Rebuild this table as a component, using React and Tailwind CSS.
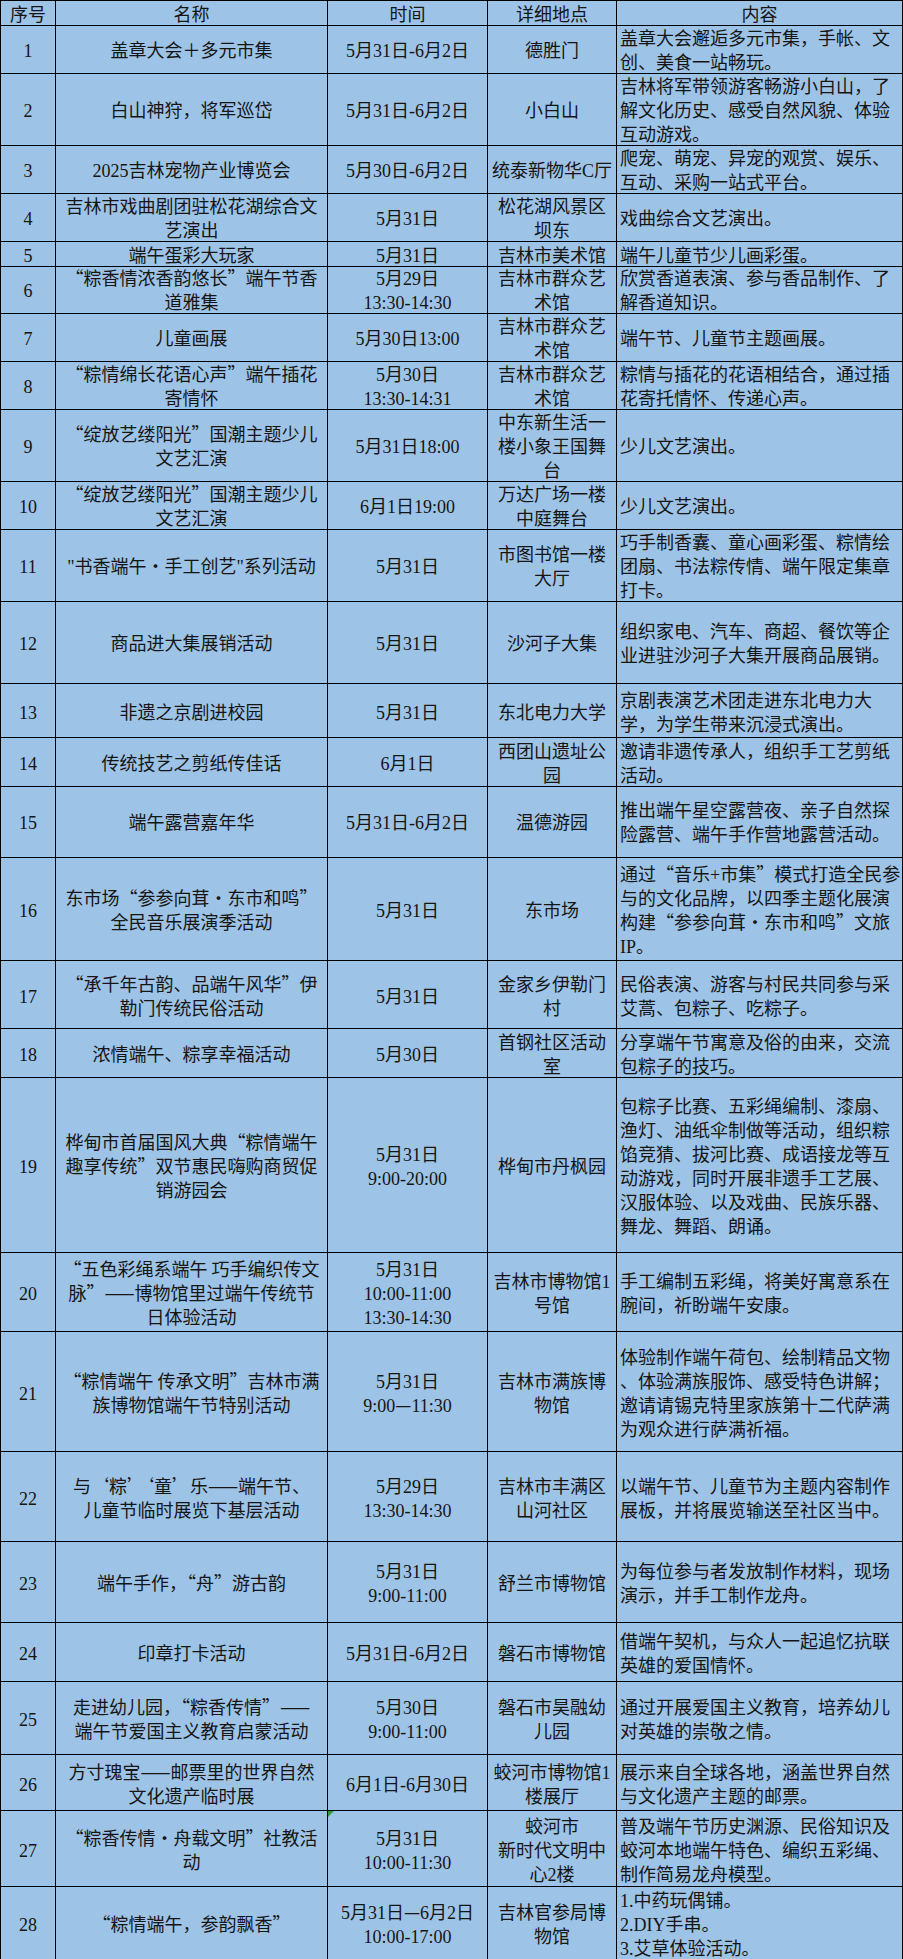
import React from 'react';

// 每行: 序号, 名称, 时间, 详细地点, 内容, 行高 ("|" 为换行)
const rows = [
  ['1', '盖章大会＋多元市集', '5月31日-6月2日', '德胜门', '盖章大会邂逅多元市集，手帐、文|创、美食一站畅玩。', 'h-[48px]'],
  ['2', '白山神狩，将军巡岱', '5月31日-6月2日', '小白山', '吉林将军带领游客畅游小白山，了|解文化历史、感受自然风貌、体验|互动游戏。', 'h-[72px]'],
  ['3', '2025吉林宠物产业博览会', '5月30日-6月2日', '统泰新物华C厅', '爬宠、萌宠、异宠的观赏、娱乐、|互动、采购一站式平台。', 'h-[48px]'],
  ['4', '吉林市戏曲剧团驻松花湖综合文|艺演出', '5月31日', '松花湖风景区|坝东', '戏曲综合文艺演出。', 'h-[49px]'],
  ['5', '端午蛋彩大玩家', '5月31日', '吉林市美术馆', '端午儿童节少儿画彩蛋。', 'h-[23px]'],
  ['6', '“粽香情浓香韵悠长”端午节香|道雅集', '5月29日|13:30-14:30', '吉林市群众艺|术馆', '欣赏香道表演、参与香品制作、了|解香道知识。', 'h-[48px]'],
  ['7', '儿童画展', '5月30日13:00', '吉林市群众艺|术馆', '端午节、儿童节主题画展。', 'h-[48px]'],
  ['8', '“粽情绵长花语心声”端午插花|寄情怀', '5月30日|13:30-14:31', '吉林市群众艺|术馆', '粽情与插花的花语相结合，通过插|花寄托情怀、传递心声。', 'h-[48px]'],
  ['9', '“绽放艺缕阳光”国潮主题少儿|文艺汇演', '5月31日18:00', '中东新生活一|楼小象王国舞|台', '少儿文艺演出。', 'h-[72px]'],
  ['10', '“绽放艺缕阳光”国潮主题少儿|文艺汇演', '6月1日19:00', '万达广场一楼|中庭舞台', '少儿文艺演出。', 'h-[48px]'],
  ['11', '"书香端午·手工创艺"系列活动', '5月31日', '市图书馆一楼|大厅', '巧手制香囊、童心画彩蛋、粽情绘|团扇、书法粽传情、端午限定集章|打卡。', 'h-[72px]'],
  ['12', '商品进大集展销活动', '5月31日', '沙河子大集', '组织家电、汽车、商超、餐饮等企|业进驻沙河子大集开展商品展销。', 'h-[83px]'],
  ['13', '非遗之京剧进校园', '5月31日', '东北电力大学', '京剧表演艺术团走进东北电力大|学，为学生带来沉浸式演出。', 'h-[54px]'],
  ['14', '传统技艺之剪纸传佳话', '6月1日', '西团山遗址公|园', '邀请非遗传承人，组织手工艺剪纸|活动。', 'h-[47px]'],
  ['15', '端午露营嘉年华', '5月31日-6月2日', '温德游园', '推出端午星空露营夜、亲子自然探|险露营、端午手作营地露营活动。', 'h-[73px]'],
  ['16', '东市场“参参向茸·东市和鸣”|全民音乐展演季活动', '5月31日', '东市场', '通过“音乐+市集”模式打造全民参|与的文化品牌，以四季主题化展演|构建“参参向茸·东市和鸣”文旅|IP。', 'h-[103px]'],
  ['17', '“承千年古韵、品端午风华”伊|勒门传统民俗活动', '5月31日', '金家乡伊勒门|村', '民俗表演、游客与村民共同参与采|艾蒿、包粽子、吃粽子。', 'h-[68px]'],
  ['18', '浓情端午、粽享幸福活动', '5月30日', '首钢社区活动|室', '分享端午节寓意及俗的由来，交流|包粽子的技巧。', 'h-[48px]'],
  ['19', '桦甸市首届国风大典“粽情端午|趣享传统”双节惠民嗨购商贸促|销游园会', '5月31日|9:00-20:00', '桦甸市丹枫园', '包粽子比赛、五彩绳编制、漆扇、|渔灯、油纸伞制做等活动，组织粽|馅竞猜、拔河比赛、成语接龙等互|动游戏，同时开展非遗手工艺展、|汉服体验、以及戏曲、民族乐器、|舞龙、舞蹈、朗诵。', 'h-[176px]'],
  ['20', '“五色彩绳系端午 巧手编织传文|脉”——博物馆里过端午传统节|日体验活动', '5月31日|10:00-11:00|13:30-14:30', '吉林市博物馆1|号馆', '手工编制五彩绳，将美好寓意系在|腕间，祈盼端午安康。', 'h-[79px]'],
  ['21', '“粽情端午 传承文明”吉林市满|族博物馆端午节特别活动', '5月31日|9:00—11:30', '吉林市满族博|物馆', '体验制作端午荷包、绘制精品文物|、体验满族服饰、感受特色讲解；|邀请请锡克特里家族第十二代萨满|为观众进行萨满祈福。', 'h-[120px]'],
  ['22', '与‘粽’‘童’乐——端午节、|儿童节临时展览下基层活动', '5月29日|13:30-14:30', '吉林市丰满区|山河社区', '以端午节、儿童节为主题内容制作|展板，并将展览输送至社区当中。', 'h-[90px]'],
  ['23', '端午手作，“舟”游古韵', '5月31日|9:00-11:00', '舒兰市博物馆', '为每位参与者发放制作材料，现场|演示，并手工制作龙舟。', 'h-[81px]'],
  ['24', '印章打卡活动', '5月31日-6月2日', '磐石市博物馆', '借端午契机，与众人一起追忆抗联|英雄的爱国情怀。', 'h-[59px]'],
  ['25', '走进幼儿园，“粽香传情”——|端午节爱国主义教育启蒙活动', '5月30日|9:00-11:00', '磐石市昊融幼|儿园', '通过开展爱国主义教育，培养幼儿|对英雄的崇敬之情。', 'h-[73px]'],
  ['26', '方寸瑰宝——邮票里的世界自然|文化遗产临时展', '6月1日-6月30日', '蛟河市博物馆1|楼展厅', '展示来自全球各地，涵盖世界自然|与文化遗产主题的邮票。', 'h-[56px]'],
  ['27', '“粽香传情·舟载文明”社教活|动', '5月31日|10:00-11:30', '蛟河市|新时代文明中|心2楼', '普及端午节历史渊源、民俗知识及|蛟河本地端午特色、编织五彩绳、|制作简易龙舟模型。', 'h-[76px]'],
  ['28', '“粽情端午，参韵飘香”', '5月31日—6月2日|10:00-17:00', '吉林官参局博|物馆', '1.中药玩偶铺。|2.DIY手串。|3.艾草体验活动。', 'h-[72px]'],
];

const cols = 'grid grid-cols-[55px_272px_160px_129px_286px]';

// 半角字母数字用衬线体, 其余用中文字体
const Mixed = ({ text }) =>
  text.split(/([0-9A-Za-z:.\-+"]+)/).map((part, i) =>
    /^[0-9A-Za-z:.\-+"]+$/.test(part) ? (
      <span key={i} className="leading-none font-['Liberation_Serif',serif]">
        {part}
      </span>
    ) : (
      part
    )
  );

const Cell = ({ text, left, children }) => (
  <div
    className={`relative flex flex-col justify-center border-r border-b border-black ${
      left ? 'items-start text-left pl-[3px]' : 'items-center text-center'
    }`}
  >
    {children}
    {text.split('|').map((line, i) => (
      <div key={i} className="h-[24px] shrink-0 whitespace-nowrap">
        <Mixed text={line} />
      </div>
    ))}
  </div>
);

export default function App() {
  return (
    <div className="w-[903px] bg-[#9dc3e6] text-[#151515] text-[18px] leading-[24px] font-['Noto_Sans_CJK_SC',sans-serif]">
      <div className="border-l border-t border-black">
        {/* 表头 */}
        <div className={`${cols} h-[24px]`}>
          <Cell text="序号" />
          <Cell text="名称" />
          <Cell text="时间" />
          <Cell text="详细地点" />
          <Cell text="内容" />
        </div>

        {rows.map(([num, name, time, place, content, h]) => (
          <div key={num} className={`${cols} ${h}`}>
            <Cell text={num} />
            <Cell text={name} />
            <Cell text={time}>
              {num === '27' && (
                <span className="absolute top-0 left-0 w-0 h-0 border-t-[6px] border-r-[6px] border-t-[#2e9e3a] border-r-transparent" />
              )}
            </Cell>
            <Cell text={place} />
            <Cell text={content} left />
          </div>
        ))}
      </div>
    </div>
  );
}
